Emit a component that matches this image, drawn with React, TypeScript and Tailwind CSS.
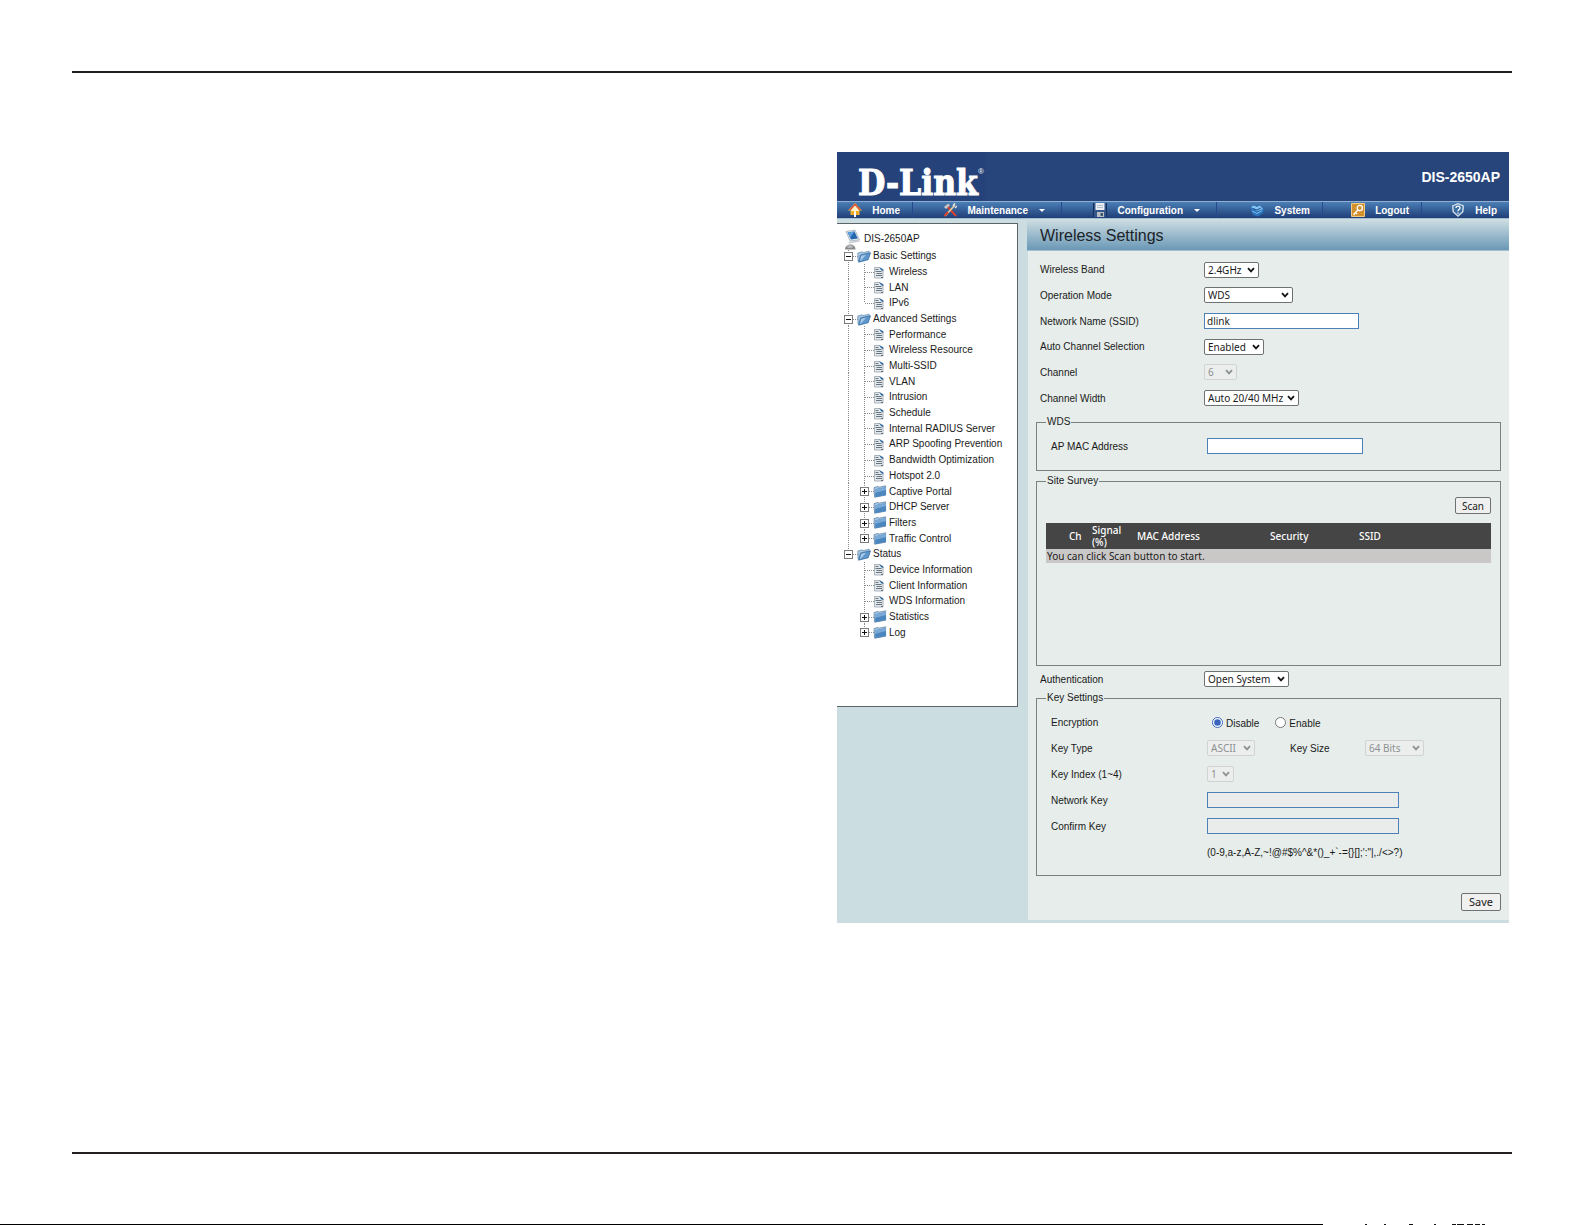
import React from "react";

type SelectProps = { id: string; value: string; width: string; disabled?: boolean };

function Select({ id, value, width, disabled }: SelectProps) {
  return (
    <span className={`relative inline-flex ${width}`}>
      <select
        id={id}
        disabled={disabled}
        defaultValue={value}
        className="h-4 w-full appearance-none rounded-xs border border-[#6f7272] bg-white pl-[3px] font-['Noto_Sans',sans-serif] text-[10px] leading-[14px] text-[#1a1a1a] opacity-100 disabled:border-[#cfd3d2] disabled:bg-[#eceeee] disabled:text-[#8d9191]"
      >
        <option>{value}</option>
      </select>
      <svg
        viewBox="0 0 8 6"
        className={`pointer-events-none absolute top-[5px] right-1 h-[6px] w-2 ${disabled ? "text-[#8d9191]" : "text-[#151515]"}`}
        fill="none"
        stroke="currentColor"
        strokeWidth="1.8"
        aria-hidden="true"
      >
        <path d="M1 1.2 4 4.4 7 1.2" />
      </svg>
    </span>
  );
}

function TextBox({ id, value, width, disabled }: SelectProps) {
  return (
    <input
      id={id}
      type="text"
      defaultValue={value}
      disabled={disabled}
      className={`h-4 ${width} border border-[#4d7fb8] bg-white px-[2px] font-['Noto_Sans',sans-serif] text-[10px] leading-[14px] text-[#1a1a1a] disabled:bg-[#e9ecea]`}
    />
  );
}

function Row({ id, label, inset, children }: { id?: string; label: string; inset?: boolean; children: React.ReactNode }) {
  return (
    <div className={`flex items-center ${inset ? "h-[26px] pl-[14px]" : "pl-3"}`}>
      <label htmlFor={id} className={inset ? "w-[156px] shrink-0" : "w-[164px] shrink-0"}>
        {label}
      </label>
      {children}
    </div>
  );
}

function Group({ title, inset, className, children }: { title: string; inset?: boolean; className: string; children: React.ReactNode }) {
  return (
    <fieldset className={`mx-2 min-w-0 border border-[#7b8080] ${className}`}>
      <legend className={`px-px leading-3 ${inset ? "" : "ml-[9px]"}`}>{title}</legend>
      {children}
    </fieldset>
  );
}

/* ---------- tree ---------- */

function Joint({ line, arm, box }: { line?: "full" | "half"; arm?: boolean; box?: "plus" | "minus" }) {
  return (
    <svg className="h-full w-4 shrink-0 overflow-visible" shapeRendering="crispEdges" aria-hidden="true">
      {line && <line x1="7.5" y1="0" x2="7.5" y2={line === "full" ? "100%" : "50%"} stroke="#8a8a8a" strokeDasharray="1 1" />}
      <svg y="50%" overflow="visible">
        {arm && <path d="M8 .5H17" stroke="#8a8a8a" strokeDasharray="1 1" />}
        {box && (
          <g fill="none">
            <rect x="3.5" y="-3.5" width="8" height="8" fill="#fff" stroke="#7c7c7c" />
            <path d={box === "plus" ? "M5 .5h5M7.5-2v5" : "M5 .5h5"} stroke="#111" />
          </g>
        )}
      </svg>
    </svg>
  );
}

function OpenFolder() {
  return (
    <svg viewBox="0 0 14 14" className="size-[14px] shrink-0" aria-hidden="true">
      <path d="M.8 4 5 2.8l1 .8 6.200-1.400v3L3 12.500 1 12z" fill="#a9c6de" stroke="#5f8cb5" strokeWidth=".7" />
      <path d="M3.600 6 13.500 3.800 11.200 10.800 1.600 13.200z" fill="#5c96cb" stroke="#33669c" strokeWidth=".7" />
      <path d="M4.300 6.800 9 5.700 4 11.500 3 12z" fill="#a9cbe8" />
    </svg>
  );
}

function ClosedFolder() {
  return (
    <svg viewBox="0 0 14 14" className="size-[14px] shrink-0" aria-hidden="true">
      <path d="M1 3.6 5 2.4l1 .8 6.6-1.4v9.4L1.6 13.2z" fill="#a9c9e5" stroke="#54799c" strokeWidth=".7" />
      <path d="M2 5.2 13 3v8L2.2 13.2z" fill="#4c86bf" />
      <path d="M2 5.2 13 3v3L2 9z" fill="#79a9d6" />
    </svg>
  );
}

function PageIcon() {
  return (
    <svg viewBox="0 0 14 14" className="size-[14px] shrink-0" aria-hidden="true">
      <path d="M1.500 2.500h5l3.500 2v8.500H1.500z" fill="#e3e8ec" stroke="#9aa3ac" strokeWidth=".8" />
      <path d="M6 2 10.300 4.500v1.800L8 5z" fill="#2f6ba6" />
      <path d="M2.500 4.500h3M2.500 6.500h6M3.500 8.500h5.500M3 10.500h6M8 12.500h2" stroke="#5a6672" strokeWidth=".9" />
    </svg>
  );
}

type Node = { text: string; kind: "open" | "leaf" | "closed"; last?: boolean; free?: boolean };

const tree: Node[] = [
  { text: "Basic Settings", kind: "open" },
  { text: "Wireless", kind: "leaf" },
  { text: "LAN", kind: "leaf" },
  { text: "IPv6", kind: "leaf", last: true },
  { text: "Advanced Settings", kind: "open" },
  { text: "Performance", kind: "leaf" },
  { text: "Wireless Resource", kind: "leaf" },
  { text: "Multi-SSID", kind: "leaf" },
  { text: "VLAN", kind: "leaf" },
  { text: "Intrusion", kind: "leaf" },
  { text: "Schedule", kind: "leaf" },
  { text: "Internal RADIUS Server", kind: "leaf" },
  { text: "ARP Spoofing Prevention", kind: "leaf" },
  { text: "Bandwidth Optimization", kind: "leaf" },
  { text: "Hotspot 2.0", kind: "leaf" },
  { text: "Captive Portal", kind: "closed" },
  { text: "DHCP Server", kind: "closed" },
  { text: "Filters", kind: "closed" },
  { text: "Traffic Control", kind: "closed", last: true },
  { text: "Status", kind: "open", last: true },
  { text: "Device Information", kind: "leaf", free: true },
  { text: "Client Information", kind: "leaf", free: true },
  { text: "WDS Information", kind: "leaf", free: true },
  { text: "Statistics", kind: "closed", free: true },
  { text: "Log", kind: "closed", last: true, free: true },
];

function TreeRow({ node }: { node: Node }) {
  const span = node.last ? "half" : "full";
  return (
    <li className="flex min-h-0 items-center">
      {node.kind === "open" ? (
        <>
          <Joint line={span} arm box="minus" />
          <OpenFolder />
        </>
      ) : (
        <>
          <Joint line={node.free ? undefined : "full"} />
          <Joint line={span} arm box={node.kind === "closed" ? "plus" : undefined} />
          {node.kind === "closed" ? <ClosedFolder /> : <PageIcon />}
        </>
      )}
      <a href="#" className="ml-[2px] pt-px leading-3 whitespace-nowrap">
        {node.text}
      </a>
    </li>
  );
}

function Sidebar() {
  return (
    <nav aria-label="Settings" className="mt-1 min-h-[484px] w-[181px] shrink-0 self-start border-y border-r border-[#5d6367] bg-white pt-1 pl-1">
      <a href="#" className="flex h-5 items-center leading-3">
        <svg viewBox="0 0 16 22" className="mt-1 ml-1 h-[22px] w-4 shrink-0" aria-hidden="true">
          <path d="M1 2.500 10 1l4.500 10L5 12z" fill="#dfe6ec" stroke="#a4afb9" strokeWidth=".8" />
          <path d="M2.600 3.600 9.400 2.400l3.400 7.200-6.800.8z" fill="#2468ae" />
          <path d="M2.600 3.600 9.400 2.400 5.400 8.500z" fill="#5ea0dc" />
          <path d="M3 13 14 11.200l1 1.400L4.500 14.6z" fill="#c7cdd2" />
          <path d="M0 20.500c0-3.500 3-5 5.500-5s5 1.500 5 5z" fill="#868a8c" />
          <ellipse cx="5" cy="17.500" rx="3" ry="1.600" fill="#b4b7b9" />
        </svg>
        <span className="ml-[3px] pt-px">DIS-2650AP</span>
      </a>
      <ul className="grid h-[392px] auto-rows-fr">
        {tree.map((node) => (
          <TreeRow key={node.text} node={node} />
        ))}
      </ul>
    </nav>
  );
}

/* ---------- header ---------- */

const homeIcon = (
  <>
    <path d="M7 0 14 7.500H11.500V12h-9V7.500H0z" fill="#e9b93a" />
    <path d="M7 .5 13 7H1z" fill="#dc4a38" />
    <path d="M7 2.500 10.500 6.500V9h-7V6.500z" fill="#fff3c4" />
    <path d="M3.500 8H6v4H3.500zM8 8h2.500v4H8z" fill="#f0a81e" />
    <path d="M6 9h2v5H6z" fill="#fff" />
  </>
);
const toolsIcon = (
  <>
    <path d="M4 3 13 13" stroke="#d8402f" strokeWidth="2" />
    <path d="M12 2 2 13" stroke="#e9d3a0" strokeWidth="1.600" />
    <path d="M5 9 1.500 13" stroke="#d8402f" strokeWidth="2" />
    <path d="M1 4 5 .8 7 2 3 6z" fill="#c9c9c4" />
    <path d="M10 3 12 0M12 5l2-2" stroke="#dfe3e6" strokeWidth="1.400" />
  </>
);
const diskIcon = (
  <>
    <path d="M0 0h14v14H0z" fill="#34568a" />
    <path d="M2.500 0h9v7h-9z" fill="#e9eef4" />
    <path d="M4 2.500h6M4 4.500h6" stroke="#b4bfcc" />
    <path d="M4 9h7v5H4z" fill="#b9c0c6" />
    <path d="M7.500 10H10v3H7.500z" fill="#3f5468" />
    <path d="M.5 0v14M13.500 0v14" stroke="#16305e" />
  </>
);
const systemIcon = (
  <>
    <path d="M0 4 4 2l3 1 3-1 4 4-1 4-5 3.500L3 12z" fill="#2b73bd" />
    <path d="M1 4 4 2.600 7 4l3-1.400L13 6 7 8z" fill="#86c4ee" />
    <path d="M2 8 7 10.500 12 7.500" stroke="#7fc0ea" fill="none" />
    <path d="M3 5.500 7 7l4-2" stroke="#1c4f8f" fill="none" />
  </>
);
const logoutIcon = (
  <>
    <path d="M.5.5h13v13H.5z" fill="#d3902f" stroke="#f2cd85" />
    <circle cx="8.800" cy="5" r="2.600" fill="none" stroke="#fff" strokeWidth="1.300" />
    <path d="M7 7 3 11v1.200M4.500 9.500 6 11" stroke="#fff" strokeWidth="1.300" fill="none" />
  </>
);
const helpIcon = (
  <>
    <path d="M7 0 13 2.500 12.500 9 7 14 1.500 9 1 2.500z" fill="#d5dee6" />
    <path d="M7 1.500 11.600 3.300 11 8.500 7 12.300 3 8.500 2.400 3.300z" fill="#3a6ea5" />
    <path d="M5 5c0-2.500 4-2.500 4 0 0 1.500-2 1.500-2 3.200M7 9.500v1.200" stroke="#fff" strokeWidth="1.300" fill="none" />
  </>
);

const menu = [
  { label: "Home", icon: homeIcon },
  { label: "Maintenance", icon: toolsIcon, caret: true },
  { label: "Configuration", icon: diskIcon, caret: true },
  { label: "System", icon: systemIcon },
  { label: "Logout", icon: logoutIcon },
  { label: "Help", icon: helpIcon },
];

function Header() {
  return (
    <header className="text-white">
      <div className="flex h-[49px] items-center justify-between bg-[#27457a]">
        <div className="flex h-full w-[148px] items-center bg-[#25437a] pt-3 pl-[21px]">
          <span className="font-['DejaVu_Serif_Condensed','DejaVu_Serif',serif] text-[35px] leading-none font-bold [-webkit-text-stroke:1px_white]">
            D-Link
          </span>
          <span className="self-start text-[8px] leading-[16px]">®</span>
        </div>
        <h1 className="pr-[9px] text-sm font-bold">DIS-2650AP</h1>
      </div>
      <nav
        aria-label="Main"
        className="grid h-[18px] grid-cols-[76fr_149fr_155fr_106fr_99fr_87fr] border-t border-b border-t-[#8fb0d0] border-b-[#a3bfd0] bg-linear-to-b from-[#4b7fb6] to-[#213f78]"
      >
        {menu.map((m) => (
          <a key={m.label} href="#" className="flex items-center justify-end border-r border-[#26488c] pr-3 text-[10px] leading-3 font-bold last:border-0">
            <svg viewBox="0 0 14 14" className="mr-[10px] size-[14px] shrink-0" aria-hidden="true">
              {m.icon}
            </svg>
            <span className="pt-px">{m.label}</span>
            {m.caret && (
              <svg viewBox="0 0 6 3" className="mr-1 ml-[11px] h-[3px] w-[6px]" aria-hidden="true">
                <path d="M0 0h6L3 3z" fill="#fff" />
              </svg>
            )}
          </a>
        ))}
      </nav>
    </header>
  );
}

const buttonStyle =
  "rounded-xs border border-[#6f7272] bg-[#f0f0f0] font-['Noto_Sans',sans-serif] text-[#1a1a1a]";

function SettingsForm() {
  return (
    <main className="min-w-0 flex-1">
      <h2 className="flex h-8 items-center border-b border-[#a3bfcd] bg-linear-to-b from-[#cfdfe3] to-[#6a98b6] pt-[2px] pl-[13px] text-base leading-none text-[#1c2328]">
        Wireless Settings
      </h2>
      <form className="ml-px bg-[#e6edea] pt-[6px] pb-[9px]" onSubmit={(e) => e.preventDefault()}>
        <div className="grid h-[154px] auto-rows-fr">
          <Row id="band" label="Wireless Band">
            <Select id="band" value="2.4GHz" width="w-[55px]" />
          </Row>
          <Row id="mode" label="Operation Mode">
            <Select id="mode" value="WDS" width="w-[89px]" />
          </Row>
          <Row id="ssid" label="Network Name (SSID)">
            <TextBox id="ssid" value="dlink" width="w-[155px]" />
          </Row>
          <Row id="auto" label="Auto Channel Selection">
            <Select id="auto" value="Enabled" width="w-[60px]" />
          </Row>
          <Row id="channel" label="Channel">
            <Select id="channel" value="6" width="w-[33px]" disabled />
          </Row>
          <Row id="width" label="Channel Width">
            <Select id="width" value="Auto 20/40 MHz" width="w-[95px]" />
          </Row>
        </div>

        <Group title="WDS" className="mt-[5px] pt-[5px] pb-[11px]">
          <Row id="mac" label="AP MAC Address" inset>
            <TextBox id="mac" value="" width="w-[156px]" />
          </Row>
        </Group>

        <Group title="Site Survey" inset className="mt-1 min-h-[191px] px-[9px] pt-[10px]">
          <div className="flex justify-end">
            <button type="button" className={`${buttonStyle} h-[17px] w-9 text-[10px] leading-3`}>
              Scan
            </button>
          </div>
          <table className="mt-[9px] w-full table-fixed border-collapse text-left font-['Noto_Sans',sans-serif] text-[10px] leading-3">
            <colgroup>
              <col className="w-[23px]" />
              <col className="w-[23px]" />
              <col className="w-[45px]" />
              <col className="w-[133px]" />
              <col className="w-[89px]" />
              <col />
            </colgroup>
            <thead className="bg-[#454546] text-white">
              <tr className="h-[26px]">
                <td />
                <th className="font-medium">Ch</th>
                <th className="font-medium">
                  Signal
                  <br />
                  (%)
                </th>
                <th className="font-medium">MAC Address</th>
                <th className="font-medium">Security</th>
                <th className="font-medium">SSID</th>
              </tr>
            </thead>
            <tbody className="bg-[#cac8c7]">
              <tr className="h-[14px]">
                <td colSpan={6} className="pl-px">
                  You can click Scan button to start.
                </td>
              </tr>
            </tbody>
          </table>
        </Group>

        <div className="grid h-[26px]">
          <Row id="auth" label="Authentication">
            <Select id="auth" value="Open System" width="w-[85px]" />
          </Row>
        </div>

        <Group title="Key Settings" className="pt-[5px] pb-[10px]">
          <Row label="Encryption" inset>
            <label className="ml-[5px] flex items-center gap-[3px]">
              <input type="radio" name="encryption" defaultChecked className="size-[11px] accent-[#3a66bd]" />
              <span className="pt-[3px]">Disable</span>
            </label>
            <label className="ml-4 flex items-center gap-[3px]">
              <input type="radio" name="encryption" className="size-[11px] accent-[#3a66bd]" />
              <span className="pt-[3px]">Enable</span>
            </label>
          </Row>
          <Row id="keytype" label="Key Type" inset>
            <Select id="keytype" value="ASCII" width="w-12" disabled />
            <label htmlFor="keysize" className="ml-[35px] w-[75px]">
              Key Size
            </label>
            <Select id="keysize" value="64 Bits" width="w-[59px]" disabled />
          </Row>
          <Row id="keyindex" label="Key Index (1~4)" inset>
            <Select id="keyindex" value="1" width="w-[27px]" disabled />
          </Row>
          <Row id="netkey" label="Network Key" inset>
            <TextBox id="netkey" value="" width="w-48" disabled />
          </Row>
          <Row id="confkey" label="Confirm Key" inset>
            <TextBox id="confkey" value="" width="w-48" disabled />
          </Row>
          <p className="flex h-[26px] items-center pl-[170px]">{"(0-9,a-z,A-Z,~!@#$%^&*()_+`-={}[];':\"|,./<>?)"}</p>
        </Group>

        <div className="mx-2 mt-[17px] flex justify-end">
          <button type="submit" className={`${buttonStyle} h-[18px] w-10 text-[11px] leading-3`}>
            Save
          </button>
        </div>
      </form>
    </main>
  );
}

export default function App() {
  return (
    <div className="flex min-h-screen flex-col bg-white font-['Liberation_Sans',Arial,sans-serif] text-[10px] text-[#1a1a1a]">
      <div className="mt-[71px] mr-[73px] ml-[72px] flex-1 border-t-2 border-[#231f20] pt-[79px]">
        <div className="mr-[3px] ml-[53.125%] bg-[#ccdde1] pb-[3px]">
          <Header />
          <div className="flex gap-[9px]">
            <Sidebar />
            <SettingsForm />
          </div>
        </div>
      </div>
      <footer>
        <div className="mr-[73px] ml-[72px] h-[2px] bg-[#231f20]" />
        <div className="mt-[70px] flex h-px">
          <div className="w-[83.5%] bg-black" />
          <svg className="h-px flex-1" shapeRendering="crispEdges" aria-hidden="true">
            <path d="M42 .5h2M61 .5h2M86 .5h4M111 .5h2M129 .5h4M134 .5h7M144 .5h6M152 .5h5M159 .5h3" stroke="#111" />
          </svg>
        </div>
      </footer>
    </div>
  );
}
